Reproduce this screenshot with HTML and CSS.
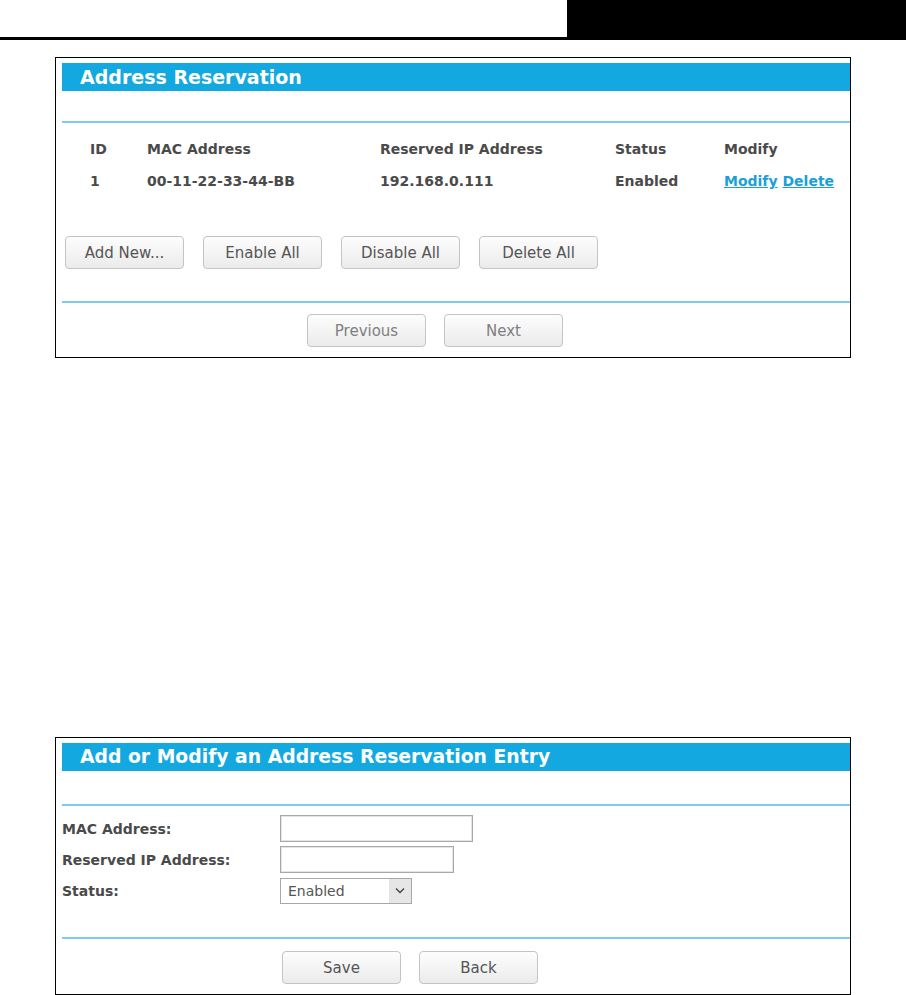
FILE: index.html
```html
<!DOCTYPE html>
<html lang="en">
<head>
    <meta charset="UTF-8">
    <title>Address Reservation</title>
    <link rel="stylesheet" href="styles.css">
</head>
<body>
    <div class="page-header">
        <div class="header-left"></div>
        <div class="header-block"></div>
    </div>

    <div class="panel">
        <div class="panel-title">Address Reservation</div>
        <div class="rule rule-top"></div>
        <table class="list">
            <tr>
                <th class="col-id">ID</th>
                <th class="col-mac">MAC Address</th>
                <th class="col-ip">Reserved IP Address</th>
                <th class="col-status">Status</th>
                <th>Modify</th>
            </tr>
            <tr>
                <td>1</td>
                <td>00-11-22-33-44-BB</td>
                <td>192.168.0.111</td>
                <td>Enabled</td>
                <td><a href="#" class="link">Modify</a> <a href="#" class="link">Delete</a></td>
            </tr>
        </table>
        <div class="actions">
            <button class="btn">Add New...</button>
            <button class="btn">Enable All</button>
            <button class="btn">Disable All</button>
            <button class="btn">Delete All</button>
        </div>
        <div class="rule rule-bottom"></div>
        <div class="pager">
            <button class="btn btn-muted">Previous</button>
            <button class="btn btn-muted">Next</button>
        </div>
    </div>

    <div class="panel panel-form">
        <div class="panel-title">Add or Modify an Address Reservation Entry</div>
        <div class="rule rule-top"></div>
        <div class="form">
            <div class="form-row">
                <label class="form-label">MAC Address:</label>
                <input type="text" class="field field-mac">
            </div>
            <div class="form-row">
                <label class="form-label">Reserved IP Address:</label>
                <input type="text" class="field field-ip">
            </div>
            <div class="form-row">
                <label class="form-label">Status:</label>
                <div class="select">
                    <span class="select-value">Enabled</span>
                    <span class="select-arrow">
                        <svg width="10" height="7" viewBox="0 0 10 7"><path d="M1 1.5 L5 5.5 L9 1.5" fill="none" stroke="#444" stroke-width="1.4"/></svg>
                    </span>
                </div>
            </div>
        </div>
        <div class="rule rule-form"></div>
        <div class="pager pager-form">
            <button class="btn">Save</button>
            <button class="btn">Back</button>
        </div>
    </div>
</body>
</html>
```

FILE: styles.css
```css
body {
    margin: 0;
    background-color: #fff;
    font-family: "DejaVu Sans", Verdana, sans-serif;
    color: #4a4a4a;
}
.page-header {
    display: flex;
    height: 37px;
    border-bottom: 3px solid #000;
}
.header-left {
    flex: 1;
}
.header-block {
    width: 339px;
    background-color: #000;
}
.panel {
    width: 788px;
    margin: 17px 0 0 55px;
    padding: 5px 0 10px 6px;
    border: 1px solid #000;
}
.panel-form {
    margin-top: 379px;
}
.panel-title {
    height: 28px;
    line-height: 28px;
    padding-left: 18px;
    background-color: #13a9e0;
    color: #fff;
    font-size: 19px;
    font-weight: bold;
}
.panel-form .panel-title {
    font-size: 18.8px;
}
.rule {
    height: 2px;
    background-color: #7ccbee;
}
.rule-top {
    margin-top: 30px;
}
.panel-form .rule-top {
    margin-top: 33px;
}
.list {
    margin-top: 10px;
    border-collapse: collapse;
    font-size: 14px;
    font-weight: bold;
}
.list th,
.list td {
    height: 32px;
    padding: 0;
    text-align: left;
    vertical-align: middle;
}
.list .col-id {
    width: 57px;
    padding-left: 28px;
}
.list tr td:first-child {
    padding-left: 28px;
}
.col-mac {
    width: 233px;
}
.col-ip {
    width: 235px;
}
.col-status {
    width: 109px;
}
.link {
    color: #1a9fdc;
    text-decoration: underline;
}
.actions {
    display: flex;
    gap: 19px;
    margin: 39px 0 0 3px;
}
.btn {
    width: 119px;
    height: 33px;
    padding: 0;
    border: 1px solid #c4c4c4;
    border-radius: 4px;
    background: linear-gradient(#fdfdfd, #ebebeb);
    font-family: "DejaVu Sans", Verdana, sans-serif;
    font-size: 15px;
    color: #555;
    cursor: pointer;
}
.btn-muted {
    color: #808080;
}
.rule-bottom {
    margin-top: 32px;
}
.pager {
    display: flex;
    gap: 18px;
    margin: 11px 0 0 245px;
}
.form {
    margin-top: 7px;
}
.form-row {
    display: flex;
    align-items: center;
    height: 31px;
}
.form-label {
    width: 218px;
    font-size: 14px;
    font-weight: bold;
}
.field {
    box-sizing: border-box;
    height: 27px;
    border: 1px solid #a8a8a8;
    box-shadow: inset 0 0 0 1px #e4e4e4;
    padding: 0 4px;
}
.field-mac {
    width: 193px;
}
.field-ip {
    width: 174px;
}
.select {
    box-sizing: border-box;
    display: flex;
    align-items: center;
    width: 132px;
    height: 26px;
    border: 1px solid #a8a8a8;
    font-size: 14px;
    color: #555;
}
.select-value {
    flex: 1;
    padding-left: 7px;
}
.select-arrow {
    display: flex;
    align-items: center;
    justify-content: center;
    width: 22px;
    height: 24px;
    background-color: #e6e6e6;
}
.rule-form {
    margin-top: 31px;
}
.pager-form {
    margin: 12px 0 0 220px;
}
```
